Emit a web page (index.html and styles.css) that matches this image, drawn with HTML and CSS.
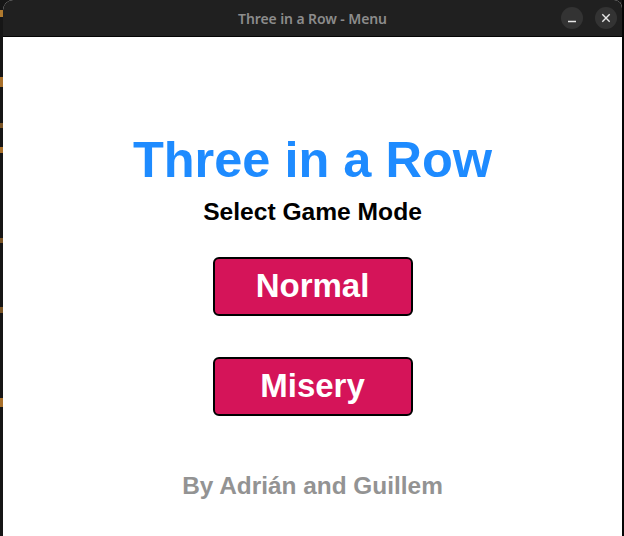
FILE: index.html
```html
<!DOCTYPE html>
<html lang="en">
<head>
<meta charset="utf-8">
<title>Three in a Row - Menu</title>
<link rel="stylesheet" href="styles.css">
</head>
<body>
<div class="desktop">
  <div class="edge-left"></div>
  <div class="window">
    <header class="titlebar">
      <div class="spacer"></div>
      <div class="title">Three in a Row - Menu</div>
      <div class="controls">
        <span class="ctl">
          <svg width="10" height="10" viewBox="0 0 10 10"><path d="M1 8.5h8" stroke="#e6e6e6" stroke-width="1.4"/></svg>
        </span>
        <span class="ctl">
          <svg width="10" height="10" viewBox="0 0 10 10"><path d="M1.3 1.3l7.4 7.4M8.7 1.3l-7.4 7.4" stroke="#e6e6e6" stroke-width="1.4"/></svg>
        </span>
      </div>
    </header>
    <main class="content">
      <h1 class="heading">Three in a Row</h1>
      <p class="subtitle">Select Game Mode</p>
      <div class="modes">
        <button class="mode">Normal</button>
        <button class="mode">Misery</button>
      </div>
      <p class="credits">By Adrián and Guillem</p>
    </main>
  </div>
  <div class="edge-right"></div>
</div>
</body>
</html>
```
FILE: styles.css
```css
html, body {
  margin: 0;
  padding: 0;
  background: #161616;
}
body {
  width: 624px;
  height: 536px;
  overflow: hidden;
  font-family: "Liberation Sans", Arial, sans-serif;
}
.desktop {
  display: flex;
  height: 536px;
}
.edge-left {
  width: 3px;
  flex: none;
  background: linear-gradient(to bottom,
    #161616 0, #161616 10px, #b07a2e 10px, #b07a2e 17px, #161616 17px,
    #161616 77px, #a8702a 77px, #a8702a 87px, #161616 87px,
    #161616 123px, #7a5426 123px, #7a5426 128px, #161616 128px,
    #161616 147px, #a8702a 147px, #a8702a 153px, #161616 153px,
    #161616 238px, #7a5426 238px, #7a5426 243px, #161616 243px,
    #161616 307px, #7a5426 307px, #7a5426 313px, #161616 313px,
    #161616 398px, #a8702a 398px, #a8702a 407px, #161616 407px,
    #161616 100%);
}
.edge-right {
  width: 2px;
  flex: none;
  background: #050505;
}
.window {
  flex: 1;
  display: flex;
  flex-direction: column;
  background: #ffffff;
  border-top-left-radius: 10px;
  border-top-right-radius: 8px;
  overflow: hidden;
}
.titlebar {
  height: 36px;
  flex: none;
  background: #202020;
  border-bottom: 1px solid #050505;
  display: grid;
  grid-template-columns: 1fr auto 1fr;
  align-items: center;
}
.title {
  font-family: "Noto Sans", "Open Sans", sans-serif;
  font-weight: 600;
  font-size: 14px;
  color: #8c8c8c;
  letter-spacing: -0.1px;
}
.controls {
  display: flex;
  justify-content: flex-end;
  gap: 12px;
  padding-right: 5px;
}
.ctl {
  width: 22px;
  height: 22px;
  border-radius: 50%;
  background: #333333;
  display: flex;
  align-items: center;
  justify-content: center;
}
.content {
  flex: 1;
  display: flex;
  flex-direction: column;
  align-items: center;
  padding-top: 93px;
}
.heading {
  margin: 0;
  font-size: 50.5px;
  line-height: 60px;
  font-weight: bold;
  color: #1e8bff;
}
.subtitle {
  margin: 8px 0 0;
  font-size: 24.6px;
  line-height: 28px;
  font-weight: bold;
  color: #000000;
}
.modes {
  margin-top: 31px;
  display: flex;
  flex-direction: column;
  gap: 41px;
}
.mode {
  width: 200px;
  height: 59px;
  box-sizing: border-box;
  border: 2px solid #000000;
  border-radius: 6px;
  background: #d51459;
  color: #ffffff;
  font-family: "Liberation Sans", Arial, sans-serif;
  font-weight: bold;
  font-size: 33px;
  line-height: 53px;
  padding: 0 0 2px;
  margin: 0;
}
.credits {
  margin: 56px 0 0;
  font-size: 24.4px;
  line-height: 28px;
  font-weight: bold;
  color: #939393;
}
```
